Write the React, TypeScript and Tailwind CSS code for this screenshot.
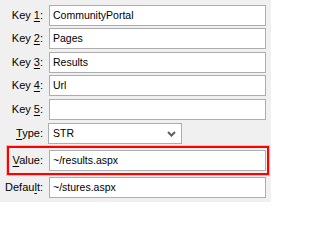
import React from 'react';

const font = { fontFamily: '"Liberation Sans", Arial, sans-serif' };

function Label({ pre, u, post, w = 'w-[44px]' }: { pre: string; u: string; post: string; w?: string }) {
  return (
    <div className={`${w} shrink-0 text-right pr-[1px] text-[11px] text-black leading-none`}>
      {pre}
      <span className="underline underline-offset-[2px]">{u}</span>
      {post}
    </div>
  );
}

function Field({ value }: { value: string }) {
  return (
    <div className="ml-[5px] w-[217px] h-[21px] bg-white border border-[#adadad] flex items-center pl-[3px] text-[10.5px] text-black leading-none">
      {value}
    </div>
  );
}

const keys = [
  { n: '1', v: 'CommunityPortal', mt: 'mt-[5px]' },
  { n: '2', v: 'Pages', mt: 'mt-[2px]' },
  { n: '3', v: 'Results', mt: 'mt-[3px]' },
  { n: '4', v: 'Url', mt: 'mt-[2px]' },
  { n: '5', v: '', mt: 'mt-[3px]' },
];

export default function App() {
  return (
    <div className="w-[271px] h-[202px] bg-[#f0f0f0] flex flex-col overflow-hidden" style={font}>
      {keys.map((k) => (
        <div key={k.n} className={`${k.mt} flex items-center`}>
          <Label pre="Key " u={k.n} post=":" />
          <Field value={k.v} />
        </div>
      ))}

      <div className="mt-[3px] flex items-center">
        <Label pre="" u="T" post="ype:" />
        <div className="ml-[4px] w-[134px] h-[21px] bg-white border border-[#adadad] flex items-center justify-between pl-[4px] pr-[5px] text-[10.5px] text-black leading-none">
          <span>STR</span>
          <svg width="9" height="6" viewBox="0 0 9 6" className="mt-[1px]">
            <polyline points="1,1 4.5,4.5 8,1" fill="none" stroke="#5f5f5f" strokeWidth="2" />
          </svg>
        </div>
      </div>

      <div className="mt-[2px] ml-[7px] w-[262px] h-[29px] border-2 border-[#ff0000] shadow-[0_0_0_1px_rgba(255,120,120,0.45)] flex items-center">
        <Label pre="" u="V" post="alue:" w="w-[35px]" />
        <Field value="~/results.aspx" />
      </div>

      <div className="mt-[2px] flex items-center">
        <Label pre="Defau" u="l" post="t:" />
        <Field value="~/stures.aspx" />
      </div>
    </div>
  );
}
